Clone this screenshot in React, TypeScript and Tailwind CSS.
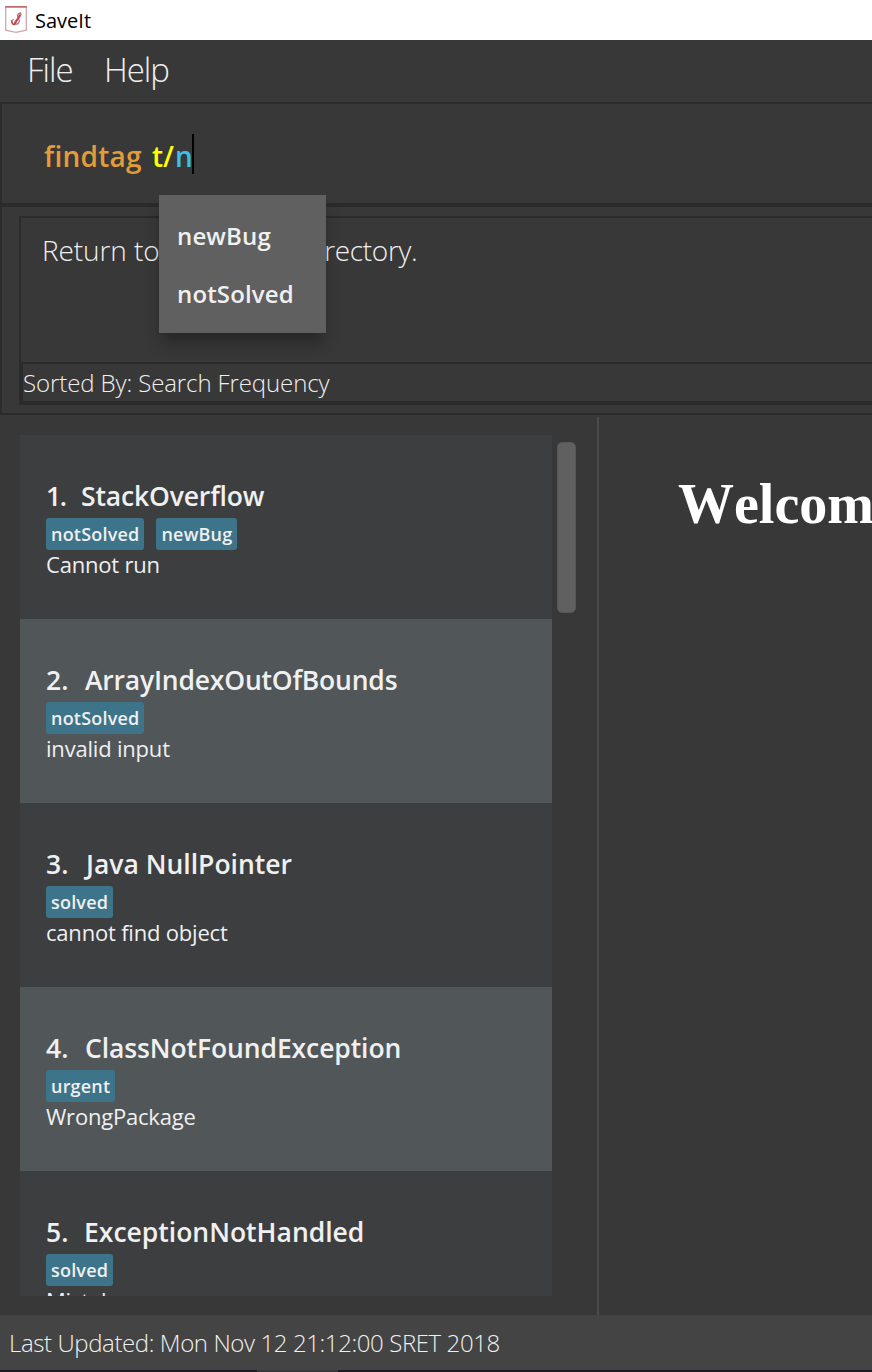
type Issue = {
  id: number;
  name: string;
  tags: string[];
  remark: string;
  numberClass: string;
  nameClass: string;
};

const issues: Issue[] = [
  { id: 1, name: "StackOverflow", tags: ["notSolved", "newBug"], remark: "Cannot run", numberClass: "w-[35px] tracking-[-1.5px]", nameClass: "tracking-[-0.15px]" },
  { id: 2, name: "ArrayIndexOutOfBounds", tags: ["notSolved"], remark: "invalid input", numberClass: "w-[39px]", nameClass: "tracking-[-0.2px]" },
  { id: 3, name: "Java NullPointer", tags: ["solved"], remark: "cannot find object", numberClass: "w-[40px]", nameClass: "tracking-[0px]" },
  { id: 4, name: "ClassNotFoundException", tags: ["urgent"], remark: "WrongPackage", numberClass: "w-[39px]", nameClass: "tracking-[-0.1px]" },
  { id: 5, name: "ExceptionNotHandled", tags: ["solved"], remark: "Mistake", numberClass: "w-[38px]", nameClass: "tracking-[0px]" },
];

const suggestions = ["newBug", "notSolved"];

function AppIcon() {
  return (
    <svg width="22" height="28" viewBox="0 0 22 28" fill="none">
      <path d="M.7.7H21.3V24.2L11 26.4L.7 24.2Z" stroke="#cfa9ab" strokeWidth="1.3" />
      <path d="M.2.9H21.8" stroke="#bd6367" strokeWidth="1.5" />
      <path d="M15.6 6.8C11.4 7.6 12.6 10.8 13.6 12.6C15.2 15.6 13.4 18.4 11 18.2C8.6 18 9.6 14.6 12 13.2C15.6 11 16.8 8.4 15.6 6.8Z" stroke="#c4686d" strokeWidth="1.2" />
      <path d="M15 8.6C12.8 12 11.6 15.6 9.6 18.2C8.2 18.8 7 17.4 6.6 14.6" stroke="#b8454b" strokeWidth="1.6" />
      <path d="M6 14.8L8.8 13.4" stroke="#c4686d" strokeWidth="1.1" />
    </svg>
  );
}

function IssueCard({ issue }: { issue: Issue }) {
  return (
    <li className="h-[184px] shrink-0 pt-[43px] pl-[26px] odd:bg-[#3c3e3f] even:bg-[#515658]">
      <div className="flex h-9 items-center text-[26.5px] leading-9 font-semibold whitespace-nowrap">
        <span className={issue.numberClass}>{issue.id}.</span>
        <span className={issue.nameClass}>{issue.name}</span>
      </div>
      <div className="mt-1 flex gap-3">
        {issue.tags.map((tag) => (
          <span key={tag} className="h-8 rounded-[3px] bg-[#3e7489] px-[5px] text-[18px] leading-[33px] font-semibold tracking-[0.2px]">
            {tag}
          </span>
        ))}
      </div>
      <p className="text-[22px] leading-7 tracking-[-0.2px]">{issue.remark}</p>
    </li>
  );
}

export default function App() {
  return (
    <div className="flex h-[1372px] w-[872px] flex-col overflow-hidden bg-[#383838] font-['Open_Sans',sans-serif] text-[#f0f0f0]">
      <header className="flex h-10 shrink-0 items-center bg-white pl-[5px] text-black">
        <AppIcon />
        <h1 className="pt-px pl-2 text-[20px] leading-6">SaveIt</h1>
      </header>

      <nav className="flex h-[62px] shrink-0 items-center pb-1 pl-[27px] text-[33px] leading-none font-light tracking-[-1px]">
        <span className="w-[77px]">File</span>
        <span>Help</span>
      </nav>

      <section className="relative flex h-[103px] shrink-0 items-center border-2 border-r-0 border-[#2b2b2b] pt-1 pl-[42px] text-[28px] font-semibold">
        <span className="w-[108px] tracking-[0.25px] text-[#e29c38]">findtag</span>
        <span className="w-[23px] text-[#ffff00]">t/</span>
        <span className="w-[17px] text-[#3ebcec]">n</span>
        <span className="-mt-1 h-10 w-0.5 bg-black" />
        <ul className="absolute top-[91px] left-[157px] z-10 h-[138px] w-[167px] bg-[#606060] py-3 pl-[18px] text-[24px] leading-[58px] tracking-[0.15px] shadow-[0_12px_14px_-2px_rgba(0,0,0,0.3)]">
          {suggestions.map((s) => (
            <li key={s}>{s}</li>
          ))}
        </ul>
      </section>

      <section className="h-[210px] shrink-0 border-2 border-r-0 border-[#2b2b2b] pt-[9px] pl-[17px]">
        <div className="flex h-[189px] flex-col border-2 border-r-0 border-[#2b2b2b]">
          <p className="flex flex-1 pt-3 pl-[21px] text-[28px] leading-10 font-light whitespace-nowrap">
            <span className="w-[260px] tracking-[-0.1px]">Return to the root</span>
            <span className="tracking-[-0.35px]">directory.</span>
          </p>
          <p className="h-[41px] border-2 border-r-0 border-[#2b2b2b] text-[24px] leading-[37px] font-light tracking-[-0.1px]">
            Sorted By: Search Frequency
          </p>
        </div>
      </section>

      <main className="flex min-h-0 flex-1 pt-0.5">
        <div className="flex w-[597px] pt-[18px] pb-[19px] pl-5">
          <ul className="flex w-[532px] flex-col overflow-hidden">
            {issues.map((issue) => (
              <IssueCard key={issue.id} issue={issue} />
            ))}
          </ul>
          <div className="mt-[7px] ml-[5px] h-[171px] w-[19px] rounded-[5px] border border-[#575757] bg-[#606060]" />
        </div>
        <div className="w-0.5 shrink-0 bg-[#4b4b4b]" />
        <article className="min-w-0 flex-1 overflow-hidden pt-[55px] pl-[79px]">
          <h2 className="font-['Liberation_Serif',serif] text-[56px] leading-[64px] font-bold text-white [font-kerning:none]">Welcome</h2>
        </article>
      </main>

      <footer className="h-[55px] shrink-0 bg-[#444444] pl-[9px] text-[24px] leading-[55px] font-light tracking-[-0.4px]">
        Last Updated: Mon Nov 12 21:12:00 SRET 2018
      </footer>
      <div className="flex h-0.5 shrink-0 bg-[#1c1c22] pl-[257px]">
        <div className="w-[81px] bg-[#38383c]" />
      </div>
    </div>
  );
}
